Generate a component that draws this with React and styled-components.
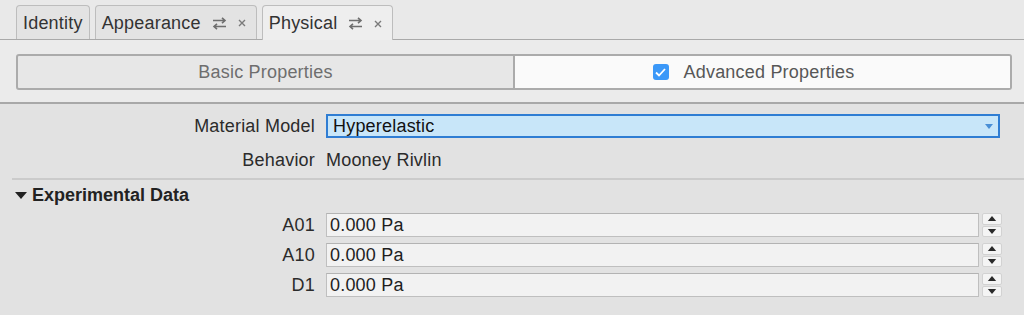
import React from 'react';
import styled, { createGlobalStyle } from 'styled-components';

const GlobalStyle = createGlobalStyle`
  html, body {
    margin: 0;
    padding: 0;
    background: #e2e2e2;
  }
  body {
    font-family: "Liberation Sans", Arial, sans-serif;
    font-size: 18px;
    color: #2b2b2b;
  }
`;

const Window = styled.div`
  width: 1024px;
  height: 315px;
  overflow: hidden;
  background: #e2e2e2;
`;

const Header = styled.div`
  background: #ebebeb;
  border-bottom: 2px solid #a8a8a8;
`;

const TabBar = styled.div`
  display: flex;
  align-items: flex-end;
  gap: 5px;
  height: 40px;
  padding-left: 16px;
  box-sizing: border-box;
  border-bottom: 1px solid #a9a9a9;
  background: #e9e9e9;
`;

const Tab = styled.div`
  display: flex;
  align-items: center;
  gap: 11px;
  height: ${(p) => (p.$active ? '35px' : '34px')};
  margin-bottom: ${(p) => (p.$active ? '-1px' : '0')};
  padding: 1px ${(p) => (p.$closable ? '10px' : '6px')} 0 6px;
  box-sizing: border-box;
  background: ${(p) => (p.$active ? '#eeeeee' : '#e3e3e3')};
  border: 1px solid #bdbdbd;
  border-bottom: none;
  border-radius: 4px 4px 0 0;
  color: #333;
  letter-spacing: 0.2px;
`;

const TabIcons = styled.span`
  display: flex;
  align-items: center;
  gap: 11px;
  color: #6e6e6e;
`;

const Segments = styled.div`
  display: flex;
  padding: 14px 12px 12px 16px;
`;

const Segment = styled.div`
  flex: 1 1 0;
  min-width: 0;
  height: 36px;
  display: flex;
  align-items: center;
  justify-content: center;
  box-sizing: border-box;
  border: 2px solid #ababab;
  background: ${(p) => (p.$selected ? '#fafafa' : '#e7e7e7')};
  color: ${(p) => (p.$selected ? '#575757' : '#6e6e6e')};
  border-radius: ${(p) => (p.$first ? '3px 0 0 3px' : '0 3px 3px 0')};
  border-left-width: ${(p) => (p.$first ? '2px' : '0')};
  letter-spacing: 0.2px;
`;

const SegmentContent = styled.span`
  display: flex;
  align-items: center;
  gap: 15px;
  margin-right: ${(p) => p.$shift || 0}px;
`;

const Check = styled.span`
  width: 16px;
  height: 16px;
  border-radius: 3px;
  background: #3b98f8;
  display: flex;
  align-items: center;
  justify-content: center;
`;

const Form = styled.div`
  padding-top: 10px;
`;

const Row = styled.div`
  display: grid;
  grid-template-columns: 326px 1fr ${(p) => (p.$spin ? '20px' : '')};
  align-items: center;
  height: ${(p) => p.$h || 30}px;
  box-sizing: border-box;
  padding-top: ${(p) => p.$top || 0}px;
  padding-right: ${(p) => (p.$spin ? '22px' : '24px')};
`;

const Label = styled.div`
  text-align: right;
  padding-right: 11px;
  color: #2b2b2b;
  letter-spacing: 0.2px;
`;

const Value = styled.div`
  color: #2b2b2b;
  letter-spacing: 0.2px;
`;

const Combo = styled.div`
  height: 24px;
  box-sizing: border-box;
  border: 2px solid #2f7dd3;
  background: #c8e6f9;
  display: flex;
  align-items: center;
  justify-content: space-between;
  padding: 0 5px;
  color: #111;
  letter-spacing: 0.2px;
`;

const Field = styled.div`
  height: 24px;
  box-sizing: border-box;
  border: 1px solid #bfbfbf;
  border-top-color: #b3b3b3;
  background: #f2f2f2;
  display: flex;
  align-items: center;
  padding-left: 3px;
  color: #1e1e1e;
  margin-right: 3px;
  letter-spacing: 0.2px;
`;

const Spinner = styled.div`
  display: flex;
  flex-direction: column;
  gap: 1px;
  height: 24px;
`;

const SpinButton = styled.div`
  flex: 1;
  background: #f4f4f4;
  border: 1px solid #d2d2d2;
  border-radius: 2px;
  display: flex;
  align-items: center;
  justify-content: center;
`;

const Divider = styled.div`
  height: 2px;
  background: #cbcbcb;
  margin: 2px 0 0 12px;
`;

const Section = styled.div`
  display: flex;
  align-items: center;
  gap: 5px;
  height: 30px;
  padding-left: 15px;
  font-weight: bold;
  color: #222;
`;

const SwapIcon = () => (
  <svg width="15" height="13" viewBox="0 0 15 13" fill="none" stroke="currentColor" strokeWidth="1.6">
    <path d="M1 3.5h12M10 0.8l3 2.7-3 2.7" />
    <path d="M14 9.5H2M5 6.8L2 9.5l3 2.7" />
  </svg>
);

const CloseIcon = () => (
  <svg width="8" height="8" viewBox="0 0 8 8" stroke="#7a7a7a" strokeWidth="1.4">
    <path d="M1 1l6 6M7 1L1 7" />
  </svg>
);

const Tri = ({ up, color = '#2a2a2a', w = 9, h = 5 }) => (
  <svg width={w} height={h} viewBox="0 0 10 6">
    <path d={up ? 'M0 6L5 0l5 6z' : 'M0 0h10L5 6z'} fill={color} />
  </svg>
);

const SpinBox = ({ label, value }) => (
  <Row $spin $h={30}>
    <Label>{label}</Label>
    <Field>{value}</Field>
    <Spinner>
      <SpinButton>
        <Tri up w={10} h={5} />
      </SpinButton>
      <SpinButton>
        <Tri w={10} h={5} />
      </SpinButton>
    </Spinner>
  </Row>
);

export default function App() {
  return (
    <>
      <GlobalStyle />
      <Window>
        <Header>
          <TabBar>
            <Tab>Identity</Tab>
            <Tab $closable>
              Appearance
              <TabIcons>
                <SwapIcon />
                <CloseIcon />
              </TabIcons>
            </Tab>
            <Tab $active $closable>
              Physical
              <TabIcons>
                <SwapIcon />
                <CloseIcon />
              </TabIcons>
            </Tab>
          </TabBar>
          <Segments>
            <Segment $first>
              <SegmentContent>Basic Properties</SegmentContent>
            </Segment>
            <Segment $selected>
              <SegmentContent $shift={18}>
                <Check>
                  <svg width="11" height="9" viewBox="0 0 11 9" fill="none" stroke="#fff" strokeWidth="1.8">
                    <path d="M1 4.5l3 3L10 1" />
                  </svg>
                </Check>
                Advanced Properties
              </SegmentContent>
            </Segment>
          </Segments>
        </Header>
        <Form>
          <Row $h={24}>
            <Label>Material Model</Label>
            <Combo>
              Hyperelastic
              <Tri color="#4a8fd6" w={8} h={5} />
            </Combo>
          </Row>
          <Row $h={38} $top={6}>
            <Label>Behavior</Label>
            <Value>Mooney Rivlin</Value>
          </Row>
          <Divider />
          <Section>
            <Tri w={12} h={9} color="#222" />
            Experimental Data
          </Section>
          <SpinBox label="A01" value="0.000 Pa" />
          <SpinBox label="A10" value="0.000 Pa" />
          <SpinBox label="D1" value="0.000 Pa" />
        </Form>
      </Window>
    </>
  );
}
